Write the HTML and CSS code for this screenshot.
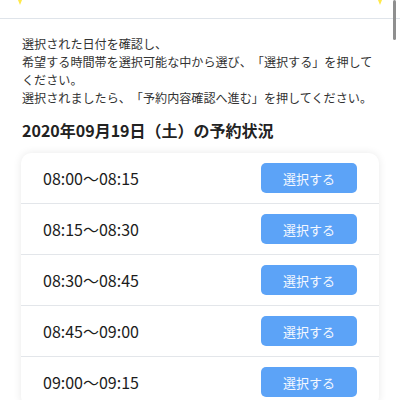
FILE: index.html
```html
<!DOCTYPE html>
<html lang="ja">
<head>
<meta charset="utf-8">
<link rel="stylesheet" href="styles.css">
</head>
<body>
<header class="top">
  <span class="tip"></span>
  <span class="tip"></span>
</header>
<div class="scroll-indicator"></div>
<main class="content">
  <p class="intro">選択された日付を確認し、<br>希望する時間帯を選択可能な中から選び、「選択する」を押して<br>ください。<br>選択されましたら、「予約内容確認へ進む」を押してください。</p>
  <h2 class="date">2020年09月19日（土）の予約状況</h2>
  <ul class="slots">
    <li class="slot"><span class="time">08:00〜08:15</span><button class="pick">選択する</button></li>
    <li class="slot"><span class="time">08:15〜08:30</span><button class="pick">選択する</button></li>
    <li class="slot"><span class="time">08:30〜08:45</span><button class="pick">選択する</button></li>
    <li class="slot"><span class="time">08:45〜09:00</span><button class="pick">選択する</button></li>
    <li class="slot"><span class="time">09:00〜09:15</span><button class="pick">選択する</button></li>
  </ul>
</main>
</body>
</html>
```

FILE: styles.css
```css
html, body {
  margin: 0;
  padding: 0;
  background: #ffffff;
  overflow: hidden;
}
body {
  font-family: "Noto Sans CJK JP", "Noto Sans", sans-serif;
  color: #333333;
  text-spacing-trim: space-all;
}
.top {
  height: 18px;
  border-bottom: 1px solid #dfe4ea;
  display: flex;
  justify-content: space-between;
  align-items: flex-start;
  padding: 0 18px;
}
.tip {
  width: 0;
  height: 0;
  border-left: 2px solid transparent;
  border-right: 2px solid transparent;
  border-top: 5px solid #ffe94a;
}
.scroll-indicator {
  position: fixed;
  top: 0;
  right: 4px;
  width: 3px;
  height: 40px;
  border-radius: 2px;
  background: #8f8f8f;
}
.content {
  padding: 0 21px;
}
.intro {
  margin: 16px 0 0 1px;
  font-size: 12.1px;
  line-height: 18px;
  color: #333333;
  white-space: nowrap;
}
.date {
  margin: 12px 0 0 1px;
  font-size: 16px;
  line-height: 22px;
  font-weight: 700;
  color: #222222;
}
.slots {
  list-style: none;
  margin: 12px 0 0 0;
  padding: 0;
  background: #ffffff;
  border-radius: 10px;
  box-shadow: 0 0 8px rgba(0, 0, 0, 0.09);
}
.slot {
  height: 50px;
  display: flex;
  align-items: center;
  justify-content: space-between;
  padding: 0 22px;
}
.slot + .slot {
  border-top: 1px solid #e3e6ea;
}
.time {
  font-size: 16px;
  color: #1c1c1c;
}
.pick {
  width: 96px;
  height: 30px;
  border: none;
  border-radius: 5px;
  background: #5ca3f7;
  color: #f4f8ff;
  font-family: "Noto Sans CJK JP", sans-serif;
  font-size: 13px;
  padding: 0;
}
```
